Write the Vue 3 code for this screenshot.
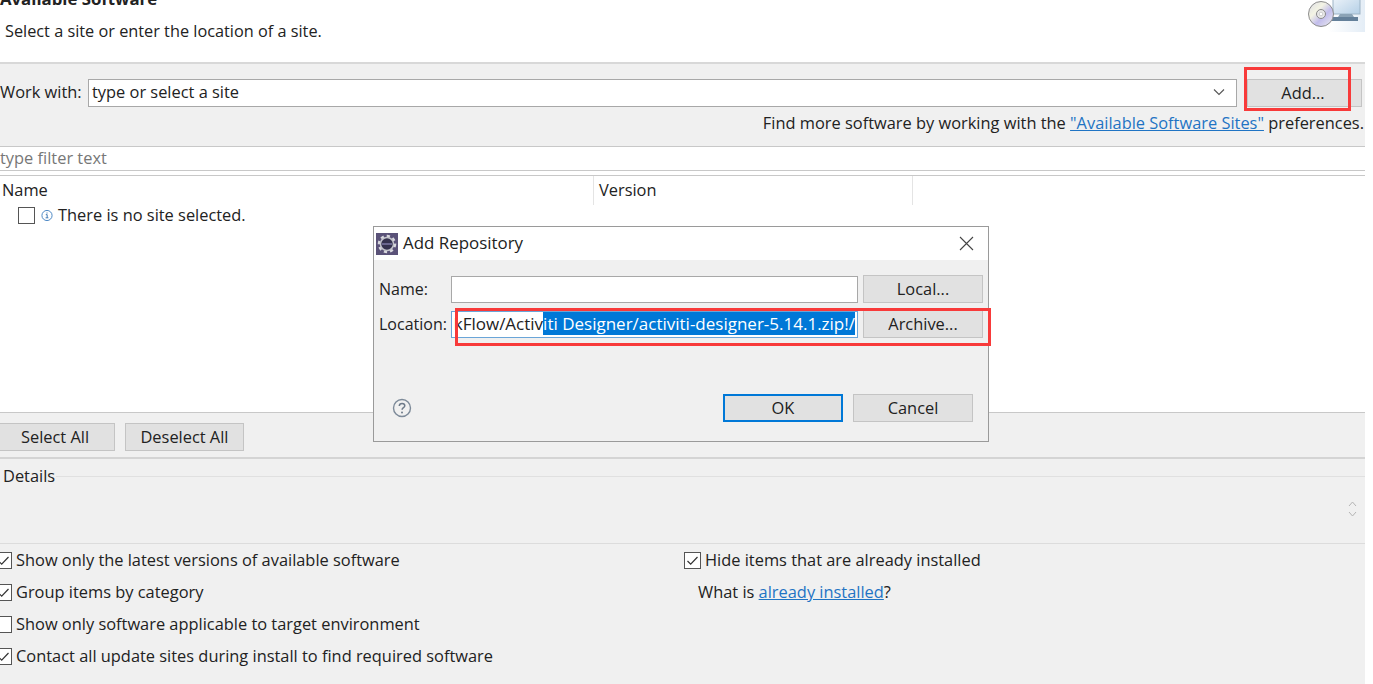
<script setup>
const options = [
  { label: 'Show only the latest versions of available software', checked: true },
  { label: 'Group items by category', checked: true },
  { label: 'Show only software applicable to target environment', checked: false },
  { label: 'Contact all update sites during install to find required software', checked: true }
]
</script>

<template>
  <div class="page">
    <header class="top">
      <h1>Available Software</h1>
      <p>Select a site or enter the location of a site.</p>
      <svg class="cd-icon" width="57" height="32" viewBox="0 0 57 32">
        <defs>
          <linearGradient id="bgfade" x1="0" y1="0" x2="1" y2="0">
            <stop offset="0" stop-color="#ffffff" />
            <stop offset="1" stop-color="#e4edf6" />
          </linearGradient>
          <linearGradient id="screen" x1="0" y1="0" x2="1" y2="1">
            <stop offset="0" stop-color="#eef4fa" />
            <stop offset="1" stop-color="#b4cfe6" />
          </linearGradient>
          <linearGradient id="disc" x1="0" y1="0" x2="1" y2="1">
            <stop offset="0" stop-color="#dcdce6" />
            <stop offset="0.35" stop-color="#f4f4e4" />
            <stop offset="0.6" stop-color="#c2bdec" />
            <stop offset="1" stop-color="#eeeeee" />
          </linearGradient>
        </defs>
        <rect x="20" y="0" width="37" height="32" fill="url(#bgfade)" />
        <rect x="25" y="-3" width="27" height="17" fill="url(#screen)" stroke="#9db4c6" />
        <path d="M32 14h12l2 3H30z" fill="#8ba3b6" />
        <rect x="24" y="17" width="26" height="4" fill="#64809a" />
        <circle cx="13" cy="14" r="12.5" fill="url(#disc)" stroke="#8c8c8c" />
        <circle cx="13" cy="14" r="4.5" fill="#e8e8e8" stroke="#8a8a8a" />
        <circle cx="13" cy="14" r="1.8" fill="#ffffff" stroke="#aaaaaa" stroke-width="0.5" />
      </svg>
    </header>

    <section class="work">
      <div class="work-row">
        <label>Work with:</label>
        <div class="combo">
          <span>type or select a site</span>
          <svg width="12" height="8" viewBox="0 0 12 8"><path d="M1 1.5l5 5 5-5" fill="none" stroke="#555" stroke-width="1.1" /></svg>
        </div>
        <button class="btn add">Add...</button>
      </div>
      <p class="find">Find more software by working with the <a href="#">"Available Software Sites"</a> preferences.</p>
    </section>

    <div class="filter">type filter text</div>

    <section class="table">
      <div class="thead">
        <div class="col-name">Name</div>
        <div class="col-version">Version</div>
      </div>
      <div class="trow">
        <span class="box"></span>
        <svg width="12" height="13" viewBox="0 0 13 13">
          <circle cx="6.5" cy="6.5" r="5.5" fill="#fff" stroke="#3f7fc0" />
          <path d="M5.2 5.6h1.5v3.2M5 9h3M6.5 3.2v1.2" fill="none" stroke="#2f6fb0" />
        </svg>
        <span>There is no site selected.</span>
      </div>
    </section>

    <section class="bottom">
      <div class="select-row">
        <button class="btn select-all">Select All</button>
        <button class="btn deselect">Deselect All</button>
      </div>
      <div class="details-title"><span>Details</span><i></i></div>
      <div class="details-body">
        <svg width="9" height="18" viewBox="0 0 9 18"><path d="M1 6l3.5-4L8 6M1 12l3.5 4L8 12" fill="none" stroke="#b5b5b5" /></svg>
      </div>
      <div class="options">
        <div class="col-left">
          <div v-for="opt in options" :key="opt.label" class="opt">
            <span class="box">
              <svg v-if="opt.checked" width="15" height="15" viewBox="0 0 15 15"><path d="M2.5 8l3.2 3.2 6.8-7.2" fill="none" stroke="#333" stroke-width="1.2" /></svg>
            </span>
            <span>{{ opt.label }}</span>
          </div>
        </div>
        <div class="col-right">
          <div class="opt">
            <span class="box">
              <svg width="15" height="15" viewBox="0 0 15 15"><path d="M2.5 8l3.2 3.2 6.8-7.2" fill="none" stroke="#333" stroke-width="1.2" /></svg>
            </span>
            <span>Hide items that are already installed</span>
          </div>
          <div class="opt what">What is&nbsp;<a href="#">already installed</a>?</div>
        </div>
      </div>
    </section>

    <div class="dialog">
      <div class="dlg-title">
        <svg width="22" height="22" viewBox="0 0 22 22">
          <rect width="22" height="22" fill="#5a5278" />
          <circle cx="11" cy="11" r="8" fill="none" stroke="#d8d8de" stroke-width="2.5" stroke-dasharray="3.2 3" />
          <circle cx="11" cy="11" r="6.5" fill="#35324e" stroke="#c4c4cc" stroke-width="1.5" />
          <path d="M6 11h10" stroke="#7c78a4" stroke-width="1.5" />
        </svg>
        <span>Add Repository</span>
        <svg class="close" width="15" height="15" viewBox="0 0 15 15"><path d="M1 1l13 13M14 1L1 14" stroke="#444" stroke-width="1.1" /></svg>
      </div>
      <div class="dlg-body">
        <div class="dlg-row">
          <label>Name:</label>
          <div class="field"></div>
          <button class="btn side">Local...</button>
        </div>
        <div class="dlg-row">
          <label>Location:</label>
          <div class="field focus"><span>kFlow/Activ<span class="sel">iti Designer/activiti-designer-5.14.1.zip!/</span></span></div>
          <button class="btn side">Archive...</button>
        </div>
        <div class="dlg-foot">
          <svg width="20" height="20" viewBox="0 0 20 20">
            <circle cx="10" cy="10" r="8.5" fill="none" stroke="#7d8a99" stroke-width="1.4" />
            <path d="M7.3 8c0-1.6 1.2-2.6 2.8-2.6s2.7 1 2.7 2.3c0 2-2.7 2-2.7 4" fill="none" stroke="#6d7a89" stroke-width="1.5" />
            <circle cx="10" cy="14.6" r="1" fill="#6d7a89" />
          </svg>
          <div class="dlg-btns">
            <button class="btn side ok">OK</button>
            <button class="btn side">Cancel</button>
          </div>
        </div>
      </div>
    </div>

    <div class="mark mark-add"></div>
    <div class="mark mark-loc"></div>
    <div class="edge"></div>
  </div>
</template>

<style scoped>
.page {
  position: relative;
  width: 1373px;
  height: 684px;
  overflow: hidden;
  background: #fff;
  color: #222;
  font-family: "Open Sans", "Noto Sans", sans-serif;
  font-size: 16.4px;
  line-height: 22px;
}

p { margin: 0; }
a { color: #1f74c4; }

.btn {
  display: block;
  height: 28px;
  padding: 0;
  border: 1px solid #c4c4c4;
  background: #e1e1e1;
  color: #222;
  font: inherit;
}

.top {
  position: relative;
  height: 62px;
  overflow: hidden;
}
.top h1 {
  margin: -12px 0 0 0;
  font-size: 16.8px;
  line-height: 22px;
  font-weight: 700;
}
.top p {
  margin: 10px 0 0 5px;
  font-size: 16.3px;
}
.cd-icon {
  position: absolute;
  top: 0;
  right: 8px;
}

.work {
  width: 1365px;
  height: 85px;
  box-sizing: border-box;
  border-top: 2px solid #d8d8d8;
  border-bottom: 1px solid #c8c8c8;
  background: #f0f0f0;
  padding-top: 15px;
}
.work-row {
  display: flex;
  align-items: center;
  height: 28px;
  line-height: 26px;
}
.work-row label {
  width: 88px;
  margin-bottom: 2px;
}
.combo {
  display: flex;
  align-items: center;
  justify-content: space-between;
  width: 1149px;
  height: 28px;
  box-sizing: border-box;
  border: 1px solid #a8a8a8;
  background: #fff;
  padding: 0 11px 2px 3px;
}
.add {
  width: 115px;
  margin-left: 10px;
  padding-right: 3px;
}
.find {
  margin-top: 5px;
  padding-right: 1px;
  text-align: right;
}

.filter {
  width: 1365px;
  height: 24px;
  box-sizing: border-box;
  border-bottom: 1px solid #c8c8c8;
  color: #777;
  line-height: 21px;
}

.table {
  width: 1365px;
  height: 242px;
  box-sizing: border-box;
  padding-top: 4px;
  border-bottom: 1px solid #c8c8c8;
}
.thead {
  display: flex;
  height: 29px;
  border-top: 1px solid #c8c8c8;
  line-height: 27px;
}
.col-name {
  width: 594px;
  padding-left: 2px;
  box-sizing: border-box;
  border-right: 1px solid #e4e4e4;
}
.col-version {
  width: 319px;
  padding-left: 5px;
  box-sizing: border-box;
  border-right: 1px solid #e4e4e4;
}
.trow {
  display: flex;
  align-items: center;
  gap: 5px;
  height: 20px;
  padding-left: 18px;
}
.trow .box { margin-right: 1px; }

.box {
  flex: none;
  display: block;
  width: 17px;
  height: 17px;
  box-sizing: border-box;
  border: 1px solid #555;
  background: #fff;
}
.box svg { display: block; }

.bottom {
  width: 1365px;
  height: 271px;
  background: #f0f0f0;
}
.select-row {
  display: flex;
  gap: 10px;
  height: 46px;
  box-sizing: border-box;
  padding-top: 10px;
  border-bottom: 2px solid #d4d4d4;
}
.select-all {
  width: 120px;
  margin-left: -5px;
}
.deselect { width: 119px; }
.details-title {
  display: flex;
  align-items: center;
  height: 34px;
  padding-left: 3px;
}
.details-title i {
  flex: 1;
  height: 1px;
  margin-left: 1px;
  background: #e0e0e0;
}
.details-body {
  display: flex;
  justify-content: flex-end;
  height: 51px;
  box-sizing: border-box;
  padding: 7px 8px 0 0;
  border-bottom: 1px solid #dcdcdc;
}
.options {
  display: flex;
}
.col-left {
  width: 689px;
  margin-left: -5px;
}
.opt {
  display: flex;
  align-items: center;
  gap: 4px;
  height: 32px;
  white-space: nowrap;
}
.what {
  gap: 0;
  padding-left: 14px;
}

.dialog {
  position: absolute;
  left: 373px;
  top: 226px;
  width: 616px;
  height: 216px;
  box-sizing: border-box;
  border: 1px solid #9a9a9a;
  background: #f0f0f0;
}
.dlg-title {
  display: flex;
  align-items: center;
  gap: 5px;
  height: 33px;
  padding-left: 2px;
  background: #fff;
  font-size: 16.9px;
}
.dlg-title span { margin-bottom: 2px; }
.dlg-title .close {
  margin-left: auto;
  margin-right: 14px;
}
.dlg-body {
  padding: 15px 5px 0 5px;
}
.dlg-row {
  display: flex;
  align-items: center;
  height: 28px;
  margin-bottom: 7px;
}
.dlg-row label {
  width: 72px;
  font-size: 16px;
}
.field {
  display: flex;
  justify-content: flex-end;
  align-items: center;
  width: 407px;
  height: 27px;
  box-sizing: border-box;
  border: 1px solid #a8a8a8;
  background: #fff;
  padding-right: 2px;
  overflow: hidden;
  white-space: nowrap;
  font-size: 17px;
}
.field.focus { border-color: #6aa5d8; }
.sel {
  background: #0078d7;
  color: #fff;
}
.side {
  width: 120px;
  margin-left: 5px;
}
.dlg-foot {
  display: flex;
  justify-content: space-between;
  align-items: center;
  padding: 49px 10px 0 13px;
}
.dlg-btns {
  display: flex;
  gap: 5px;
}
.ok {
  border: 2px solid #0078d7;
}

.mark {
  position: absolute;
  box-sizing: border-box;
  border: 3px solid #f83a3a;
}
.mark-add {
  left: 1244px;
  top: 67px;
  width: 107px;
  height: 44px;
}
.mark-loc {
  left: 455px;
  top: 308px;
  width: 536px;
  height: 38px;
}
.edge {
  position: absolute;
  top: 0;
  right: 0;
  width: 8px;
  height: 684px;
  background: #fff;
}
</style>
